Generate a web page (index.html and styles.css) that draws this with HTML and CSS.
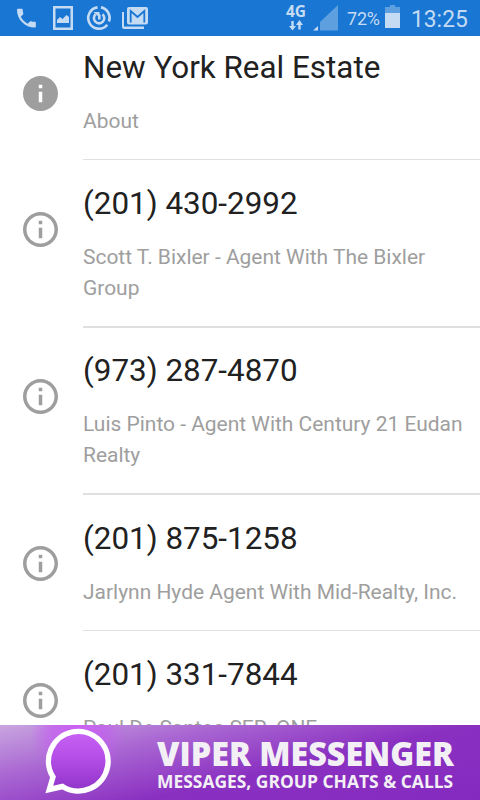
FILE: index.html
```html
<!DOCTYPE html>
<html lang="en">
<head>
<meta charset="utf-8">
<title>New York Real Estate</title>
<link rel="stylesheet" href="styles.css">
</head>
<body>
<svg class="defs" aria-hidden="true">
  <symbol id="info" viewBox="2 2 20 20"><path d="M11 17h2v-6h-2v6zm1-15C6.480 2 2 6.480 2 12s4.480 10 10 10 10-4.480 10-10S17.520 2 12 2zm0 18c-4.410 0-8-3.590-8-8s3.590-8 8-8 8 3.590 8 8-3.590 8-8 8zM11 9h2V7h-2v2z"/></symbol>
  <symbol id="info-full" viewBox="2 2 20 20"><path d="M12 2C6.480 2 2 6.480 2 12s4.480 10 10 10 10-4.480 10-10S17.520 2 12 2zm1 15h-2v-6h2v6zm0-8h-2V7h2v2z"/></symbol>
</svg>
<div class="screen">
  <header class="status">
    <svg class="notifications" viewBox="0 0 160 36">
      <path transform="translate(13.800 5.500) scale(1.050)" d="M6.620 10.790c1.440 2.830 3.760 5.140 6.590 6.590l2.200-2.200c.27-.27.67-.36 1.020-.24 1.120.37 2.330.57 3.570.57.550 0 1 .45 1 1V20c0 .55-.45 1-1 1-9.390 0-17-7.610-17-17 0-.55.450-1 1-1h3.500c.55 0 1 .45 1 1 0 1.250.2 2.450.57 3.570.11.350.03.740-.25 1.020l-2.200 2.200z"/>
      <path fill-rule="evenodd" d="M53 6h20v24H53zM55.500 8.500v19h15v-19z"/>
      <path d="M57 23v-3l3-3 2.500 2 4-4 2.500 2v6z"/>
      <g class="line">
        <path d="M97.500 7.400A10.700 10.700 0 1 0 107.300 24.700"/>
        <path d="M101 7.400A10.700 10.700 0 0 1 109 21.500"/>
        <path d="M95.700 14.200A5.200 5.200 0 1 0 102.500 14.200M99.300 19.500v-5"/>
      </g>
      <path d="M93.500 12h6v5.500z"/>
      <rect x="127" y="7" width="21" height="17.500" rx="2"/>
      <path class="letter" d="M130.700 22.500V11l6.800 6 6.800-6v11.500"/>
      <path d="M122 12h2v14.500h20V29h-20a2 2 0 0 1-2-2z"/>
    </svg>
    <div class="network">
      <span class="network-type">4G</span>
      <svg class="arrows" viewBox="0 0 14 11"><path d="M2.300 1h2.400v5H7L3.500 10.500 0 6h2.300zM9.300 9.500V5H7l3.500-5L14 5h-2.300v4.500z"/></svg>
    </div>
    <svg class="signal" viewBox="0 0 26 26"><path class="dim" d="M7 25.500V17L25 0v25.500z"/><path d="M0 25.500 5 21v4.500z"/></svg>
    <span class="percent">72%</span>
    <svg class="battery" viewBox="0 0 15 23"><path class="dim" d="M0 2h5V0h5v2h5v6H0z"/><path d="M0 8h15v15H0z"/></svg>
    <span class="clock">13:25</span>
  </header>
  <main class="list">
    <section class="row first">
      <svg class="icon"><use href="#info-full"/></svg>
      <div class="content"><h1>New York Real Estate</h1><p>About</p></div>
    </section>
    <section class="row tall">
      <svg class="icon"><use href="#info"/></svg>
      <div class="content thick"><h2>(201) 430-2992</h2><p>Scott T. Bixler - Agent With The Bixler Group</p></div>
    </section>
    <section class="row raised">
      <svg class="icon"><use href="#info"/></svg>
      <div class="content thick"><h2>(973) 287-4870</h2><p>Luis Pinto - Agent With Century 21 Eudan Realty</p></div>
    </section>
    <section class="row fourth">
      <svg class="icon"><use href="#info"/></svg>
      <div class="content"><h2>(201) 875-1258</h2><p>Jarlynn Hyde Agent With Mid-Realty, Inc.</p></div>
    </section>
    <section class="row">
      <svg class="icon"><use href="#info"/></svg>
      <div class="content"><h2>(201) 331-7844</h2><p>Paul De Santos SER, ONE</p></div>
    </section>
  </main>
  <footer class="banner">
    <svg class="bubble" viewBox="0 0 70 70">
      <linearGradient id="glow" x2="0" y2="1"><stop stop-color="#c862f5"/><stop offset=".4" stop-color="#b750e8"/><stop offset="1" stop-color="#8f33c8"/></linearGradient>
      <path fill="url(#glow)" d="M12 51A29.800 29.800 0 1 1 21.500 60.500L8.300 63.500z"/>
    </svg>
    <div class="slogan">
      <strong class="brand">VIPER MESSENGER</strong>
      <span class="tagline">MESSAGES, GROUP CHATS &amp; CALLS</span>
    </div>
  </footer>
</div>
</body>
</html>
```

FILE: styles.css
```css
* { box-sizing: border-box; }
body { margin: 0; background: #fff; font-family: Roboto, sans-serif; }
.defs { display: block; width: 0; height: 0; }
.screen { width: 480px; height: 800px; overflow: hidden; display: flex; flex-direction: column; }
.status { flex: none; height: 36px; display: flex; background: #1976d2; color: #c5dbf3; overflow: hidden; }
.status svg { fill: #c5dbf3; flex: none; }
.status .dim { fill: #5e9fdf; }
.status .line { fill: none; stroke: #c5dbf3; stroke-width: 2.6; }
.status .letter { fill: none; stroke: #1976d2; stroke-width: 1.8; }
.notifications { width: 160px; height: 36px; }
.network { width: 22px; margin-left: 125px; display: flex; flex-direction: column; white-space: nowrap; }
.network-type { height: 20px; font: bold 15.500px/22px "Noto Sans", sans-serif; margin-left: 1px; }
.arrows { width: 14px; height: 11px; margin-left: 4px; }
.signal { width: 26px; height: 26px; margin: 5px 0 0 6px; }
.percent { width: 36px; margin-left: 8px; font-size: 18px; line-height: 38px; letter-spacing: -.2px; }
.battery { width: 15px; height: 23px; margin: 5px 0 0 2px; }
.clock { margin-left: 11px; font-size: 24.500px; line-height: 38px; transform: scaleX(.93); transform-origin: left; }
.list { height: 689px; flex: none; overflow: hidden; }
.row { display: flex; height: 136px; padding-left: 23px; }
.row.first { margin-top: -12px; }
.row.tall { height: 168px; }
.row.raised { height: 167px; }
.icon { width: 35px; height: 35px; margin: 52px 25px 0 0; flex: none; fill: #9e9e9e; }
.raised .icon, .fourth .icon { margin-top: 51px; }
.content { flex: 1; padding-top: 25px; border-bottom: 1px solid #e0e0e0; }
.thick { border-bottom-width: 2px; }
.raised .content { padding-top: 24px; }
h1, h2 { margin: 0; font-weight: 400; font-size: 31.400px; line-height: 38px; color: #212121; white-space: nowrap; }
p { margin: 19px 0 0; font-size: 20.960px; line-height: 31px; color: #9e9e9e; }
.banner { flex: none; height: 75px; display: flex; color: #f3f0f5; overflow: hidden;
  background: radial-gradient(ellipse 48px 50px at 78px 5px, #cc60f5 0, #c45cf0aa 55%, transparent 100%), linear-gradient(167deg, #c9a6e0 0, #a966d2 28%, #8a30c1 58%, #852abf 100%); }
.bubble { width: 70px; height: 70px; margin: 1px 0 0 41px; stroke: #fff; stroke-width: 5.4; flex: none; }
.slogan { margin-left: 46px; display: flex; flex-direction: column; white-space: nowrap; font-family: "Open Sans", sans-serif; font-weight: 700; }
.brand { font-size: 33px; line-height: 40px; height: 42px; padding-top: 9px; transform: scaleX(.98); transform-origin: left; }
.tagline { font-size: 18px; line-height: 29px; transform: scaleX(.968); transform-origin: left; }
```
